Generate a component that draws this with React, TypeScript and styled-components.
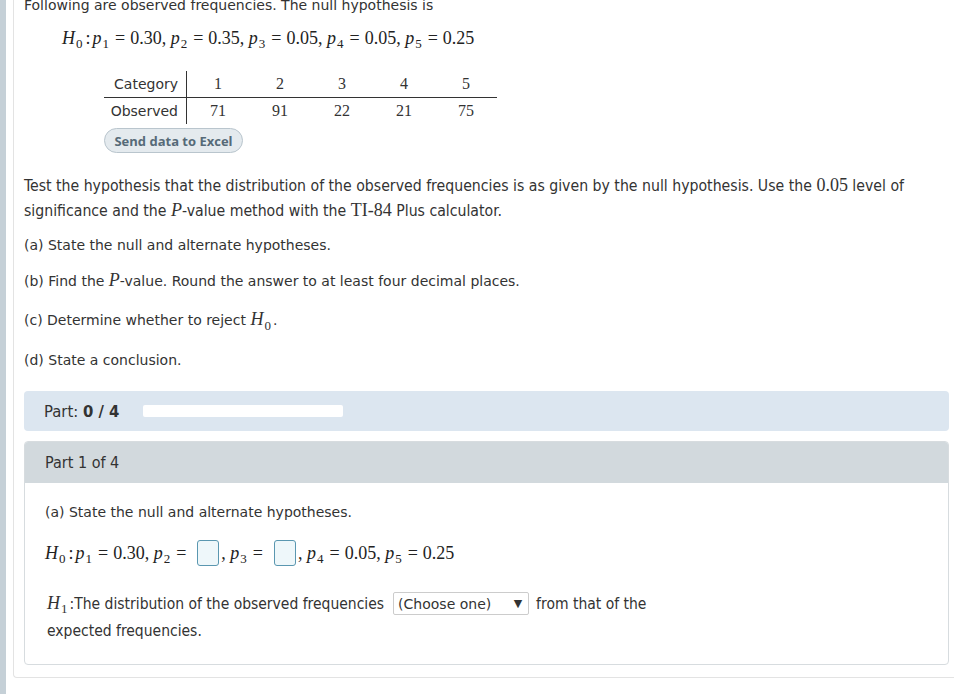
import React from 'react';
import styled, { createGlobalStyle } from 'styled-components';

const Global = createGlobalStyle`
  body {
    margin: 0;
    background: #fff;
    font-family: "DejaVu Sans", Verdana, sans-serif;
    color: #333;
    overflow: hidden;
  }
`;

const condensed = '"DejaVu Sans Condensed", "DejaVu Sans", sans-serif';

const Page = styled.div`
  display: flex;
  height: 694px;
  align-items: flex-start;
`;

const Stripe = styled.div`
  width: 6px;
  height: 694px;
  background: #c5d0d7;
  flex: none;
`;

const Shell = styled.div`
  flex: 1;
  margin-left: 7px;
  border-left: 1px solid #e3e3e3;
  border-bottom: 1px solid #e3e3e3;
  border-bottom-left-radius: 4px;
  padding: 0 5px 12px 10px;
`;

const Line = styled.div<{ $top?: number; $condensed?: boolean }>`
  margin-top: ${p => p.$top ?? 0}px;
  font-size: ${p => (p.$condensed ? 15.7 : 14)}px;
  line-height: 24px;
  font-family: ${p => (p.$condensed ? condensed : '"DejaVu Sans", Verdana, sans-serif')};
  white-space: nowrap;
`;

const MathLine = styled.div<{ $top?: number; $indent?: number }>`
  margin-top: ${p => p.$top ?? 0}px;
  padding-left: ${p => p.$indent ?? 0}px;
  font-family: "Liberation Serif", "Times New Roman", serif;
  font-size: 18px;
  line-height: 30px;
  display: flex;
  align-items: center;
  white-space: pre;
  color: #222;
`;

const V = styled.i`
  font-family: "Liberation Serif", serif;
  font-size: 18px;
`;

const Sub = styled.span`
  display: inline-block;
  font-size: 13px;
  font-style: normal;
  font-family: "Liberation Serif", serif;
  line-height: 1;
  transform: translateY(5px);
  margin: 0 2px 0 1px;
`;

const Eq = styled.span`
  margin: 0 5px 0 4px;
`;

const Colon = styled.span`
  margin: 0 2px 0 1px;
`;

const Num = styled.span<{ $size?: number }>`
  font-family: "Liberation Serif", serif;
  font-size: ${p => p.$size ?? 18}px;
`;

const Table = styled.table`
  margin: 18px 0 0 80px;
  border-collapse: collapse;
`;

const Label = styled.td`
  width: 74px;
  padding: 0 8px 0 0;
  text-align: right;
  border-right: 1px solid #333;
  font-family: "DejaVu Sans", sans-serif;
  font-size: 14px;
  height: 26px;
`;

const Cell = styled.td`
  width: 62px;
  padding: 0;
  text-align: center;
  font-family: "Liberation Serif", serif;
  font-size: 16px;
  height: 26px;
`;

const HeadRow = styled.tr`
  border-bottom: 1px solid #333;
`;

const Button = styled.button`
  margin: 4px 0 0 80px;
  height: 25px;
  width: 139px;
  border-radius: 13px;
  border: 1px solid #b9c5cd;
  background: #e4eaee;
  color: #566a78;
  font-family: "Open Sans", sans-serif;
  font-weight: 700;
  font-size: 13px;
  padding: 0;
  display: block;
`;

const Part = styled.div`
  margin-top: 19px;
  height: 40px;
  background: #dce6f0;
  border-radius: 4px;
  display: flex;
  align-items: center;
  padding-left: 20px;
  font-family: ${condensed};
  font-size: 16.5px;
  gap: 24px;
`;

const Progress = styled.div`
  width: 200px;
  height: 12px;
  border-radius: 2px;
  background: #fff;
`;

const Panel = styled.div`
  margin-top: 10px;
  border: 1px solid #d7dcdf;
  border-radius: 4px;
  overflow: hidden;
`;

const PanelHead = styled.div`
  height: 41px;
  background: #d2d9dd;
  display: flex;
  align-items: center;
  padding-left: 20px;
  font-family: ${condensed};
  font-size: 16px;
`;

const PanelBody = styled.div`
  padding: 17px 20px 20px 20px;
`;

const Box = styled.span`
  display: inline-block;
  width: 20px;
  height: 24px;
  border: 1px solid #5a97b0;
  border-radius: 3px;
  background: #eef7fa;
  margin: 0 2px 0 6px;
`;

const AltLine = styled.div<{ $top?: number; $indent?: number }>`
  margin-top: ${p => p.$top ?? 0}px;
  padding-left: ${p => p.$indent ?? 0}px;
  height: 27px;
  display: flex;
  align-items: center;
  font-family: ${condensed};
  font-size: 15.5px;
  white-space: pre;
`;

const Select = styled.div`
  margin: 0 7px 0 9px;
  width: 136px;
  height: 23px;
  border: 1px solid #ccc;
  border-radius: 2px;
  display: flex;
  align-items: center;
  justify-content: space-between;
  padding: 0 6px 0 4px;
  box-sizing: border-box;
  font-family: "DejaVu Sans", sans-serif;
  font-size: 14px;
  background: #fff;
`;

const Arrow = styled.span`
  font-size: 11px;
`;

const H = ({ n }: { n: number }) => (
  <>
    <V>H</V>
    <Sub>{n}</Sub>
  </>
);

const P = ({ n }: { n: number }) => (
  <>
    <V>p</V>
    <Sub>{n}</Sub>
  </>
);

const cats = [1, 2, 3, 4, 5];
const obs = [71, 91, 22, 21, 75];

export default function App() {
  return (
    <>
      <Global />
      <Page>
        <Stripe />
        <Shell>
          <Line $top={-7}>Following are observed frequencies. The null hypothesis is</Line>
          <MathLine $top={6} $indent={38}>
            <H n={0} />
            <Colon>:</Colon>
            <P n={1} />
            <Eq>=</Eq>0.30, <P n={2} />
            <Eq>=</Eq>0.35, <P n={3} />
            <Eq>=</Eq>0.05, <P n={4} />
            <Eq>=</Eq>0.05, <P n={5} />
            <Eq>=</Eq>0.25
          </MathLine>
          <Table>
            <tbody>
              <HeadRow>
                <Label>Category</Label>
                {cats.map(c => (
                  <Cell key={c}>{c}</Cell>
                ))}
              </HeadRow>
              <tr>
                <Label>Observed</Label>
                {obs.map((o, i) => (
                  <Cell key={i}>{o}</Cell>
                ))}
              </tr>
            </tbody>
          </Table>
          <Button>Send data to Excel</Button>
          <Line $top={20} $condensed>
            Test the hypothesis that the distribution of the observed frequencies is as given by the null hypothesis. Use the{' '}
            <Num $size={18}>0.05</Num> level of
          </Line>
          <Line $condensed>
            significance and the <V>P</V>-value method with the <Num $size={18}>TI-84</Num> Plus calculator.
          </Line>
          <Line $top={10}>(a) State the null and alternate hypotheses.</Line>
          <Line $top={11}>
            (b) Find the <V>P</V>-value. Round the answer to at least four decimal places.
          </Line>
          <Line $top={14}>
            (c) Determine whether to reject <H n={0} />.
          </Line>
          <Line $top={16}>(d) State a conclusion.</Line>
          <Part>
            <span>
              Part: <b>0 / 4</b>
            </span>
            <Progress />
          </Part>
          <Panel>
            <PanelHead>Part 1 of 4</PanelHead>
            <PanelBody>
              <Line>(a) State the null and alternate hypotheses.</Line>
              <MathLine $top={14}>
                <H n={0} />
                <Colon>:</Colon>
                <P n={1} />
                <Eq>=</Eq>0.30, <P n={2} />
                <Eq>=</Eq>
                <Box />, <P n={3} />
                <Eq>=</Eq>
                <Box />, <P n={4} />
                <Eq>=</Eq>0.05, <P n={5} />
                <Eq>=</Eq>0.25
              </MathLine>
              <AltLine $top={22} $indent={2}>
                <H n={1} />:The distribution of the observed frequencies
                <Select>
                  <span>(Choose one)</span>
                  <Arrow>▼</Arrow>
                </Select>
                from that of the
              </AltLine>
              <AltLine $indent={2}>expected frequencies.</AltLine>
            </PanelBody>
          </Panel>
        </Shell>
      </Page>
    </>
  );
}
